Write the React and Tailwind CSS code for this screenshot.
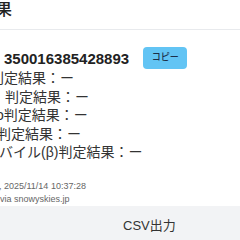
import { useState } from 'react'

const font = { fontFamily: '"Liberation Sans", "Noto Sans CJK JP", sans-serif' }

export default function App() {
  const [copied, setCopied] = useState(false)

  return (
    <div className="w-[240px] h-[240px] overflow-hidden bg-white text-[#333]" style={font}>
      {/* Modal header */}
      <div className="h-[30px] border-b border-[#e8eaed] whitespace-nowrap">
        <h2 className="-ml-[20px] text-[16px] leading-[20px] font-medium text-[#222]">結果</h2>
      </div>

      {/* Body */}
      <div className="whitespace-nowrap">
        <div className="mt-[17px] h-[22px] pl-[4px] flex items-center gap-[14px]">
          <span className="text-[15px] font-bold text-[#222] leading-none">350016385428893</span>
          <button
            onClick={() => setCopied(true)}
            className="w-[44px] h-[22px] rounded-[4px] bg-[#62c4f4] text-[9px] font-medium text-[#1b2f4a] flex items-center justify-center"
          >
            {copied ? '済' : 'コピー'}
          </button>
        </div>

        <div className="text-[14px] leading-[18.5px]">
          <p className="-ml-[10px]">判定結果：ー</p>
          <p className="pl-[5px]">判定結果：ー</p>
          <p className="-ml-[4px]">o判定結果：ー</p>
          <p className="-ml-[3px]">判定結果：ー</p>
          <p className="-ml-[1px]">バイル(β)判定結果：ー</p>
        </div>

        <div className="mt-[18px] text-[9px] text-[#666]">
          <p className="leading-[13px] -ml-[1px]">, 2025/11/14 10:37:28</p>
          <p className="leading-[13px]">via snowyskies.jp</p>
        </div>
      </div>

      {/* Footer */}
      <div className="h-[35px] bg-[#f2f3f5] pt-[7px] pl-[123px]">
        <span className="text-[13px] leading-[18px] text-[#333]">CSV出力</span>
      </div>
    </div>
  )
}
